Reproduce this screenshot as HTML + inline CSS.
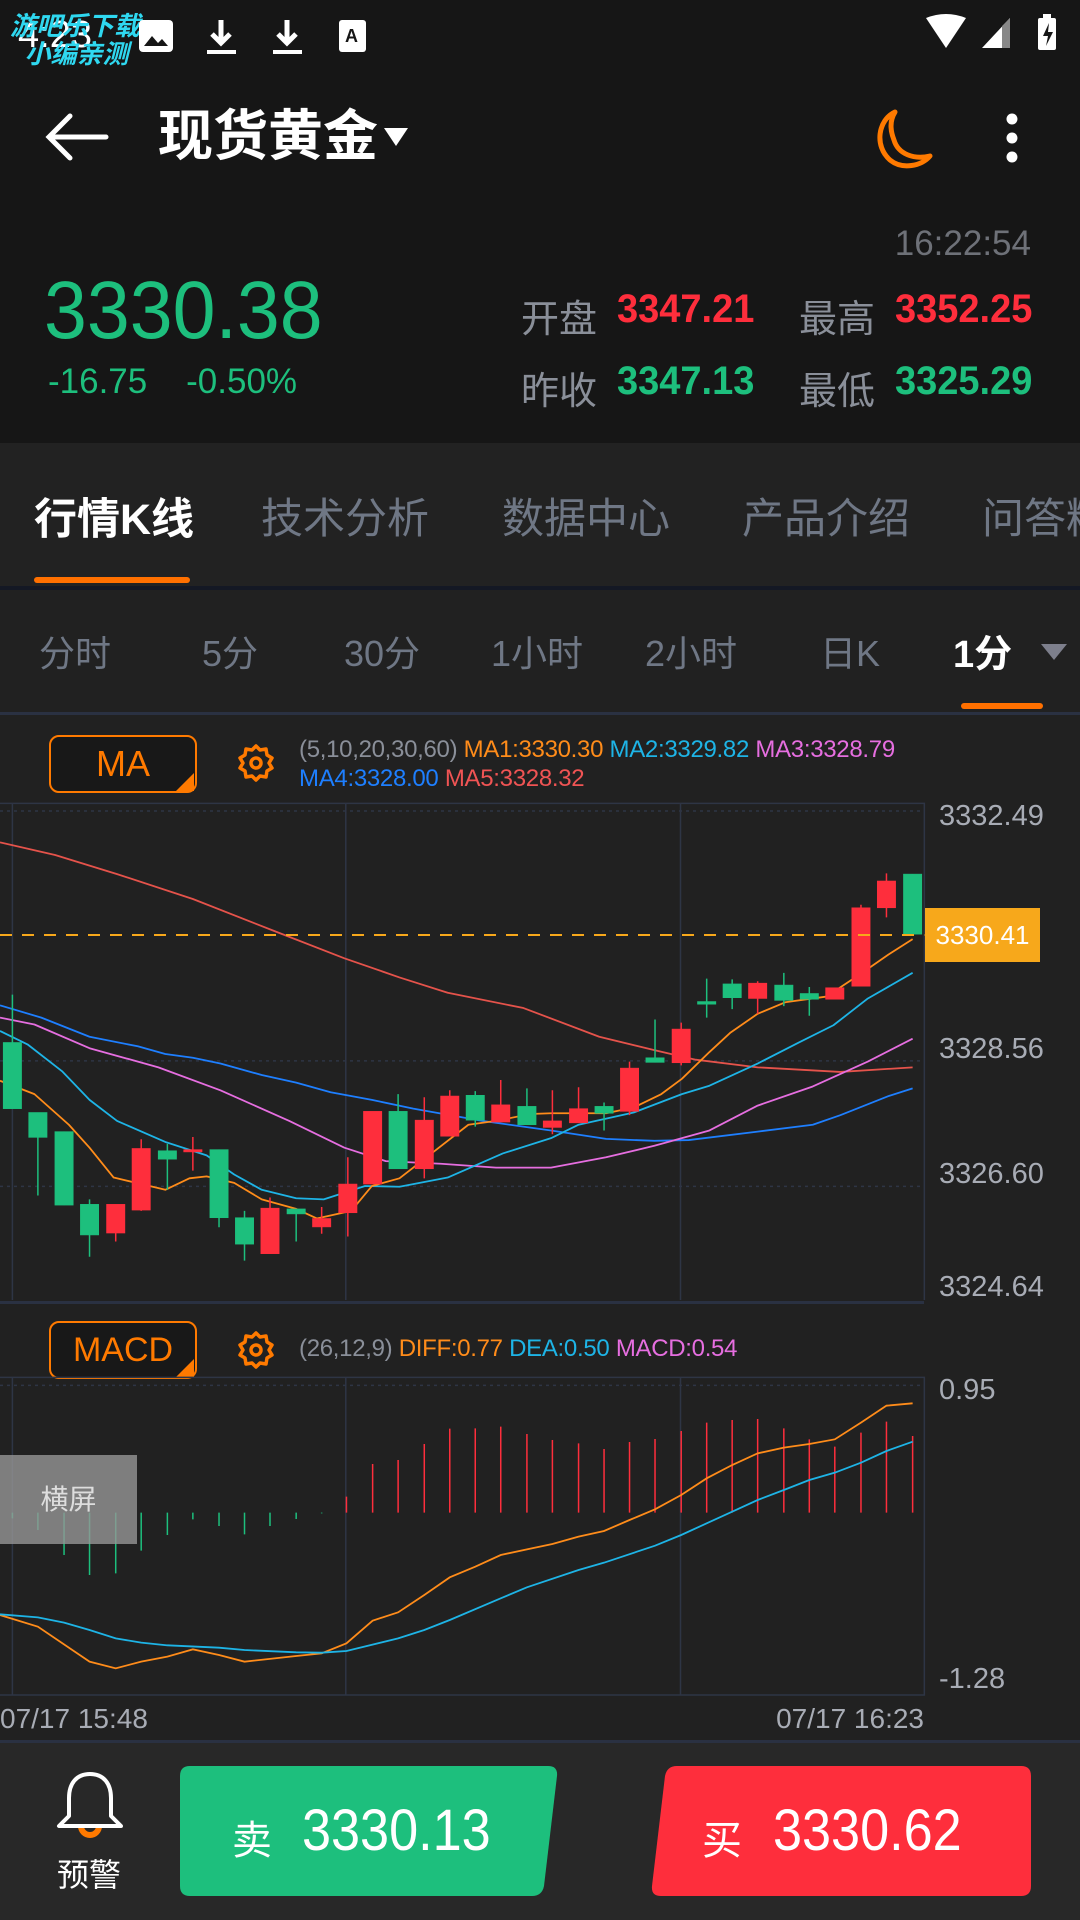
<!DOCTYPE html>
<html><head><meta charset="utf-8"><style>
*{margin:0;padding:0;box-sizing:border-box}
body{width:1080px;height:1920px;background:#212121;position:relative;overflow:hidden;font-family:"Liberation Sans","Noto Sans CJK SC",sans-serif;color:#fff}
.a{position:absolute;white-space:nowrap}
.g{color:#1dbf7d}.r{color:#fe2e3c}.gr{color:#8a909b}
</style></head><body>
<!-- header bg -->
<div class="a" style="left:0;top:0;width:1080px;height:443px;background:#161616"></div>
<!-- status bar -->
<div class="a" style="left:18px;top:14px;font-size:38px;color:#fff">4:23</div>
<div class="a" style="left:10px;top:12px;font-size:26px;font-weight:bold;font-style:italic;color:#2fd8f0;line-height:28px">游吧乐下载<br>&nbsp;&nbsp;小编亲测</div>
<svg class="a" style="left:138px;top:18px" width="240" height="40" viewBox="0 0 240 40">
<rect x="1" y="2" width="34" height="32" rx="4" fill="#fff"/><path d="M6 28l8-10 6 7 4-4 6 7z" fill="#161616"/>
<path d="M83 2v22M74 16l9 9 9-9" stroke="#fff" stroke-width="5" fill="none"/><rect x="69" y="32" width="29" height="4" fill="#fff"/>
<path d="M149 2v22M140 16l9 9 9-9" stroke="#fff" stroke-width="5" fill="none"/><rect x="135" y="32" width="29" height="4" fill="#fff"/>
<rect x="201" y="2" width="27" height="32" rx="3" fill="#fff"/><text x="207" y="24" font-size="18" font-weight="bold" fill="#161616" font-family="Liberation Sans">A</text>
</svg>
<svg class="a" style="left:920px;top:14px" width="150" height="36" viewBox="0 0 150 36">
<path d="M6 4 Q26 -4 46 4 L26 34z" fill="#fff"/>
<path d="M62 34 L90 4 V34z" fill="#fff"/><path d="M82 12V34H90V4z" fill="#888"/>
<rect x="118" y="4" width="18" height="32" rx="2" fill="#fff"/><rect x="123" y="0" width="8" height="5" fill="#fff"/><path d="M129 9l-6 13h5l-2 10 7-14h-5z" fill="#161616"/>
</svg>
<!-- toolbar -->
<svg class="a" style="left:44px;top:112px" width="70" height="50" viewBox="0 0 70 50"><path d="M62 25H6M26 4L5 25l21 21" stroke="#fff" stroke-width="5" fill="none" stroke-linecap="round"/></svg>
<div class="a" style="left:158px;top:104px;font-size:55px;font-weight:bold;color:#fff;line-height:64px">现货黄金</div>
<svg class="a" style="left:382px;top:126px" width="28" height="22"><path d="M2 2h24L14 20z" fill="#fff"/></svg>
<svg class="a" style="left:870px;top:106px" width="66" height="66" viewBox="0 0 66 66"><path d="M25 6 C8 14 4 40 20 54 C32 64 52 60 60 50 C44 54 28 48 24 34 C20 24 20 14 25 6z" fill="none" stroke="#ff7a00" stroke-width="5" stroke-linejoin="round"/></svg>
<svg class="a" style="left:1000px;top:110px" width="24" height="56"><circle cx="12" cy="9" r="5.5" fill="#fff"/><circle cx="12" cy="28" r="5.5" fill="#fff"/><circle cx="12" cy="47" r="5.5" fill="#fff"/></svg>
<!-- price -->
<div class="a gr" style="right:49px;top:224px;font-size:35px;color:#6e7178">16:22:54</div>
<div class="a g" style="left:44px;top:268px;font-size:82px;line-height:86px;transform:scaleX(.94);transform-origin:left">3330.38</div>
<div class="a g" style="left:48px;top:362px;font-size:35px">-16.75&nbsp;&nbsp;&nbsp;&nbsp;-0.50%</div>
<div class="a" style="left:521px;top:288px;font-size:38px;color:#8a8f99">开盘</div>
<div class="a r" style="left:617px;top:287px;font-size:40px;font-weight:bold;transform:scaleX(.95);transform-origin:left">3347.21</div>
<div class="a" style="left:799px;top:288px;font-size:38px;color:#8a8f99">最高</div>
<div class="a r" style="left:895px;top:287px;font-size:40px;font-weight:bold;transform:scaleX(.95);transform-origin:left">3352.25</div>
<div class="a" style="left:521px;top:360px;font-size:38px;color:#8a8f99">昨收</div>
<div class="a g" style="left:617px;top:359px;font-size:40px;font-weight:bold;transform:scaleX(.95);transform-origin:left">3347.13</div>
<div class="a" style="left:799px;top:360px;font-size:38px;color:#8a8f99">最低</div>
<div class="a g" style="left:895px;top:359px;font-size:40px;font-weight:bold;transform:scaleX(.95);transform-origin:left">3325.29</div>
<!-- tabs -->
<div class="a" style="left:0;top:443px;width:1080px;height:145px;background:#222;overflow:hidden">
<div class="a" style="left:34px;top:42px;font-size:43px;font-weight:bold;color:#fff">行情K线</div>
<div class="a" style="left:261px;top:42px;font-size:42px;color:#6f7785">技术分析</div>
<div class="a" style="left:502px;top:42px;font-size:42px;color:#6f7785">数据中心</div>
<div class="a" style="left:742px;top:42px;font-size:42px;color:#6f7785">产品介绍</div>
<div class="a" style="left:982px;top:42px;font-size:42px;color:#6f7785">问答精选</div>
</div>
<div class="a" style="left:34px;top:577px;width:156px;height:6px;border-radius:3px;background:#ff7000"></div>
<div class="a" style="left:0;top:586px;width:1080px;height:4px;background:#141824"></div>
<!-- periods -->
<div class="a" style="left:0;top:590px;width:1080px;height:122px;background:#212121"></div>
<div class="a" style="top:625px;font-size:36px;color:#6f7785;left:39px">分时</div>
<div class="a" style="top:625px;font-size:36px;color:#6f7785;left:202px">5分</div>
<div class="a" style="top:625px;font-size:36px;color:#6f7785;left:344px">30分</div>
<div class="a" style="top:625px;font-size:36px;color:#6f7785;left:491px">1小时</div>
<div class="a" style="top:625px;font-size:36px;color:#6f7785;left:645px">2小时</div>
<div class="a" style="top:625px;font-size:36px;color:#6f7785;left:820px">日K</div>
<div class="a" style="top:623px;font-size:38px;font-weight:bold;color:#fff;left:953px">1分</div>
<svg class="a" style="left:1040px;top:643px" width="28" height="18"><path d="M1 1h26L14 17z" fill="#7d7f8c"/></svg>
<div class="a" style="left:961px;top:703px;width:82px;height:6px;border-radius:3px;background:#ff7000"></div>
<div class="a" style="left:0;top:712px;width:1080px;height:3px;background:#2a3142"></div>
<!-- MA header -->
<div class="a" style="left:49px;top:735px;width:148px;height:58px;border:2px solid #ff7a00;border-radius:10px;background:#181818;color:#ff7a00;font-size:36px;text-align:center;line-height:54px">MA</div>
<svg class="a" style="left:176px;top:773px" width="18" height="18"><path d="M18 0V18H0z" fill="#ff7a00"/></svg>
<svg class="a" style="left:236px;top:743px" width="40" height="40" viewBox="0 0 40 40"><path d="M20 3l4 4 6-1 1 6 5 3-3 5 3 5-5 3-1 6-6-1-4 4-4-4-6 1-1-6-5-3 3-5-3-5 5-3 1-6 6 1z" fill="none" stroke="#ff7a00" stroke-width="3.5" stroke-linejoin="round"/><circle cx="20" cy="20" r="5" fill="none" stroke="#ff7a00" stroke-width="3.5"/></svg>
<div class="a" style="left:299px;top:735px;font-size:24px;line-height:29px;letter-spacing:-0.3px"><span style="color:#8a8f99">(5,10,20,30,60)</span> <span style="color:#ff8c1a">MA1:3330.30</span> <span style="color:#1eb4e6">MA2:3329.82</span> <span style="color:#e66ee0">MA3:3328.79</span><br><span style="color:#1e7fff">MA4:3328.00</span> <span style="color:#f05454">MA5:3328.32</span></div>
<!-- main chart -->
<svg class="a" style="left:0;top:700px" width="1080" height="600" viewBox="0 0 1568 1568" preserveAspectRatio="none">
<g stroke="#2e3545" stroke-width="1.5" fill="none">
<path d="M0 270H1342V1568" vector-effect="non-scaling-stroke"/><path d="M18 270V1568M502 270V1568M988 270V1568" vector-effect="non-scaling-stroke"/>
<path d="M0 290H1340M0 943H1340M0 1271H1340" stroke-dasharray="3 4" vector-effect="non-scaling-stroke"/>
</g>
<g fill="none" stroke-width="1.8" stroke-linejoin="round">
<polyline vector-effect="non-scaling-stroke" stroke="#e5534b" points="0,372 80,405 170,455 280,520 400,605 500,675 580,725 650,765 760,805 870,880 950,915 1010,940 1100,960 1220,972 1325,960"/>
<polyline vector-effect="non-scaling-stroke" stroke="#1e7fff" points="0,798 60,830 130,880 200,905 240,925 280,935 320,950 380,980 430,1000 480,1025 540,1045 600,1068 700,1100 800,1125 880,1147 950,1152 1000,1150 1100,1128 1180,1110 1220,1085 1290,1035 1325,1015"/>
<polyline vector-effect="non-scaling-stroke" stroke="#e66ee0" points="0,830 50,848 130,910 230,960 320,1020 420,1100 500,1170 560,1205 640,1212 720,1222 800,1222 880,1195 950,1165 1030,1125 1100,1060 1180,1010 1260,945 1325,885"/>
<polyline vector-effect="non-scaling-stroke" stroke="#1eb4e6" points="0,865 40,900 90,970 130,1045 170,1100 240,1155 300,1190 340,1240 380,1280 430,1302 470,1305 530,1270 580,1272 650,1248 730,1185 800,1145 840,1110 920,1078 990,1030 1030,1008 1100,950 1160,895 1210,850 1260,780 1325,713"/>
<polyline vector-effect="non-scaling-stroke" stroke="#ff8c1a" points="0,995 50,1030 100,1110 130,1170 165,1248 205,1265 240,1280 275,1250 300,1245 340,1262 380,1305 430,1330 460,1355 510,1335 540,1270 580,1250 630,1180 680,1110 720,1100 770,1082 800,1080 880,1080 920,1065 960,1030 990,990 1030,920 1060,870 1100,820 1140,790 1200,775 1250,715 1290,665 1325,625"/>
</g>
<g stroke-width="1.5">
<g fill="#1dbf7d" stroke="#1dbf7d">
<path vector-effect="non-scaling-stroke" d="M18 770V1068M55 1078V1295M93 1128V1320M130 1305V1455M243 1160V1280M318 1175V1378M355 1335V1465M430 1330V1415M578 1030V1225M690 1022V1115M765 1015V1110M877 1052V1125M951 835V947M1026 728V830M1063 730V808M1138 713V800M1175 750V825M1325 455V612"/>
<rect x="5" y="895" width="26" height="173"/><rect x="42" y="1078" width="26" height="65"/><rect x="80" y="1128" width="26" height="192"/><rect x="117" y="1318" width="26" height="80"/><rect x="230" y="1178" width="26" height="22"/><rect x="305" y="1175" width="26" height="178"/><rect x="342" y="1353" width="26" height="69"/><rect x="417" y="1330" width="26" height="13"/><rect x="565" y="1075" width="26" height="150"/><rect x="677" y="1033" width="26" height="65"/><rect x="752" y="1062" width="26" height="48"/><rect x="864" y="1062" width="26" height="18"/><rect x="938" y="935" width="26" height="12"/><rect x="1013" y="788" width="26" height="7"/><rect x="1050" y="742" width="26" height="36"/><rect x="1125" y="745" width="26" height="40"/><rect x="1162" y="767" width="26" height="15"/><rect x="1312" y="455" width="26" height="157"/>
</g>
<g fill="#fe2e3c" stroke="#fe2e3c">
<path vector-effect="non-scaling-stroke" d="M168 1318V1415M205 1148V1335M280 1142V1230M392 1300V1447M467 1325V1395M505 1195V1402M616 1038V1250M653 1020V1140M727 993V1103M802 1020V1135M840 1012V1105M914 945V1085M989 843V955M1100 735V820M1212 752V782M1250 535V748M1287 453V568"/>
<rect x="155" y="1318" width="26" height="75"/><rect x="192" y="1172" width="26" height="161"/><rect x="267" y="1175" width="26" height="6"/><rect x="379" y="1328" width="26" height="119"/><rect x="454" y="1355" width="26" height="22"/><rect x="492" y="1265" width="26" height="75"/><rect x="528" y="1075" width="26" height="190"/><rect x="603" y="1098" width="26" height="127"/><rect x="640" y="1035" width="26" height="105"/><rect x="714" y="1058" width="26" height="45"/><rect x="789" y="1100" width="26" height="17"/><rect x="827" y="1068" width="26" height="37"/><rect x="901" y="962" width="26" height="113"/><rect x="976" y="860" width="26" height="88"/><rect x="1087" y="740" width="26" height="40"/><rect x="1199" y="752" width="26" height="30"/><rect x="1237" y="543" width="26" height="205"/><rect x="1274" y="473" width="26" height="70"/>
</g></g>
<path d="M0 614H1342" stroke="#f7a81b" stroke-width="2" stroke-dasharray="12 10" vector-effect="non-scaling-stroke"/>
</svg>
<div class="a" style="left:939px;top:800px;font-size:29px;color:#a8acb5">3332.49</div>
<div class="a" style="left:939px;top:1033px;font-size:29px;color:#a8acb5">3328.56</div>
<div class="a" style="left:939px;top:1158px;font-size:29px;color:#a8acb5">3326.60</div>
<div class="a" style="left:939px;top:1271px;font-size:29px;color:#a8acb5">3324.64</div>
<div class="a" style="left:925px;top:908px;width:115px;height:54px;background:#f7a81b;color:#fff;font-size:26px;line-height:54px;text-align:center">3330.41</div>
<div class="a" style="left:0;top:1301px;width:924px;height:3px;background:#2a3142"></div>
<!-- MACD header -->
<div class="a" style="left:49px;top:1321px;width:148px;height:58px;border:2px solid #ff7a00;border-radius:10px;background:#181818;color:#ff7a00;font-size:34px;text-align:center;line-height:54px">MACD</div>
<svg class="a" style="left:176px;top:1359px" width="18" height="18"><path d="M18 0V18H0z" fill="#ff7a00"/></svg>
<svg class="a" style="left:236px;top:1330px" width="40" height="40" viewBox="0 0 40 40"><path d="M20 3l4 4 6-1 1 6 5 3-3 5 3 5-5 3-1 6-6-1-4 4-4-4-6 1-1-6-5-3 3-5-3-5 5-3 1-6 6 1z" fill="none" stroke="#ff7a00" stroke-width="3.5" stroke-linejoin="round"/><circle cx="20" cy="20" r="5" fill="none" stroke="#ff7a00" stroke-width="3.5"/></svg>
<div class="a" style="left:299px;top:1335px;font-size:24px;letter-spacing:-0.3px"><span style="color:#8a8f99">(26,12,9)</span> <span style="color:#ff8c1a">DIFF:0.77</span> <span style="color:#1eb4e6">DEA:0.50</span> <span style="color:#e66ee0">MACD:0.54</span></div>
<!-- MACD chart -->
<svg class="a" style="left:0;top:1300px" width="1080" height="440" viewBox="0 0 1568 1320" preserveAspectRatio="none">
<g fill="none" stroke="#2e3545" stroke-width="1.5">
<path vector-effect="non-scaling-stroke" d="M0 232H1342V1185H0M18 232V1185M502 232V1185M988 232V1185"/>
<path vector-effect="non-scaling-stroke" d="M0 256H1340" stroke-dasharray="3 4"/>
</g>
<path vector-effect="non-scaling-stroke" stroke="#1dbf7d" stroke-width="1.5" d="M18 638V655M55 638V690M93 638V765M130 638V825M168 638V820M205 638V752M243 638V705M280 638V658M318 638V678M355 638V703M392 638V678M430 638V657M467 638V640"/>
<path vector-effect="non-scaling-stroke" stroke="#fe2e3c" stroke-width="1.5" d="M503 638V590M541 638V492M578 638V480M616 638V432M653 638V386M690 638V385M727 638V380M765 638V402M802 638V420M840 638V430M877 638V447M914 638V426M951 638V417M989 638V393M1026 638V368M1063 638V360M1100 638V357M1138 638V385M1175 638V418M1212 638V440M1250 638V398M1287 638V365M1325 638V408"/>
<polyline vector-effect="non-scaling-stroke" fill="none" stroke="#ff8c1a" stroke-width="1.8" points="0,945 55,980 130,1085 168,1105 205,1085 243,1070 280,1048 318,1065 355,1085 430,1068 467,1060 503,1030 541,962 578,937 616,885 653,832 690,800 727,765 765,748 802,732 840,710 877,693 914,660 951,628 989,585 1026,535 1063,495 1100,460 1138,443 1175,432 1212,418 1250,368 1287,317 1325,310"/>
<polyline vector-effect="non-scaling-stroke" fill="none" stroke="#1eb4e6" stroke-width="1.8" points="0,943 55,952 93,968 130,990 168,1015 205,1028 243,1036 318,1043 355,1050 430,1057 467,1058 503,1053 578,1015 616,990 653,960 727,895 765,862 840,810 877,788 951,737 989,705 1026,670 1063,635 1100,600 1138,570 1175,540 1212,518 1250,488 1287,453 1325,425"/>
</svg>
<div class="a" style="left:0;top:1455px;width:137px;height:89px;background:rgba(150,150,150,.8);color:#ddd;font-size:28px;line-height:89px;text-align:center">横屏</div>
<div class="a" style="left:939px;top:1374px;font-size:29px;color:#a8acb5">0.95</div>
<div class="a" style="left:939px;top:1663px;font-size:29px;color:#a8acb5">-1.28</div>
<div class="a" style="left:0;top:1703px;font-size:28px;color:#a8acb5">07/17 15:48</div>
<div class="a" style="right:156px;top:1703px;font-size:28px;color:#a8acb5">07/17 16:23</div>
<!-- bottom -->
<div class="a" style="left:0;top:1740px;width:1080px;height:180px;background:#282828;border-top:3px solid #2a3142"></div>
<svg class="a" style="left:52px;top:1770px" width="76" height="72" viewBox="0 0 76 72"><circle cx="38" cy="56" r="9" fill="none" stroke="#ff7a00" stroke-width="6"/><path d="M38 4C24 4 17 14 17 28V46L7 56H69L59 46V28C59 14 52 4 38 4z" fill="#282828" stroke="#fff" stroke-width="4" stroke-linejoin="round"/></svg>
<div class="a" style="left:57px;top:1850px;font-size:32px;color:#fff">预警</div>
<svg class="a" style="left:180px;top:1766px" width="380" height="130"><path d="M10 0H368Q378 0 377 10L364 120Q362 130 352 130H10Q0 130 0 120V10Q0 0 10 0z" fill="#1dbf7d"/></svg>
<div class="a" style="left:232px;top:1808px;font-size:40px;color:#fff">卖</div>
<div class="a" style="left:302px;top:1797px;font-size:58px;color:#fff;transform:scaleX(.9);transform-origin:left">3330.13</div>
<svg class="a" style="left:651px;top:1766px" width="382" height="130"><path d="M36 0H370Q380 0 380 10V120Q380 130 370 130H10Q0 130 1 120L14 10Q16 0 26 0z" fill="#fe2e3c"/></svg>
<div class="a" style="left:702px;top:1808px;font-size:40px;color:#fff">买</div>
<div class="a" style="left:773px;top:1797px;font-size:58px;color:#fff;transform:scaleX(.9);transform-origin:left">3330.62</div>
</body></html>
